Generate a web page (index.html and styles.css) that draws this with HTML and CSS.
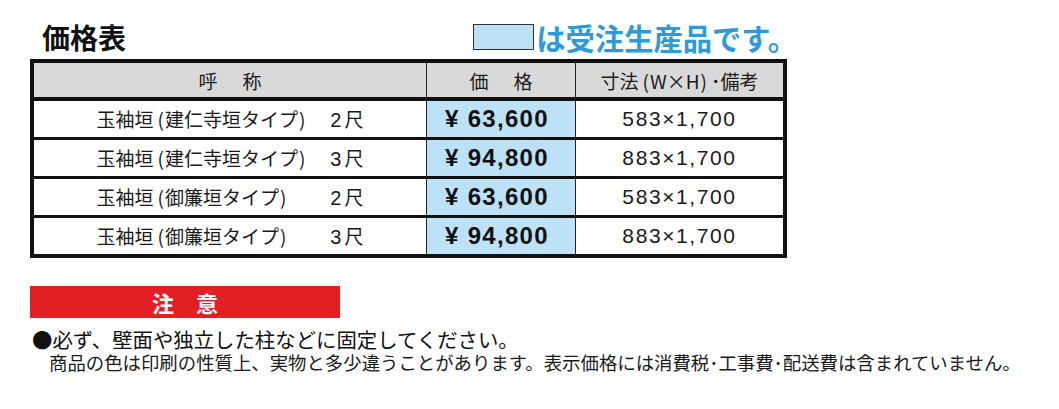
FILE: index.html
```html
<!DOCTYPE html>
<html lang="ja">
<head>
<meta charset="utf-8">
<title>価格表</title>
<link rel="stylesheet" href="styles.css">
</head>
<body>
<div class="page">
  <div class="top">
    <h1 class="title">価格表</h1>
    <div class="legend"><span class="legend-box"></span><span class="legend-text">は受注生産品です。</span></div>
  </div>

  <div class="table">
    <div class="row head">
      <div class="cell name">呼　称</div>
      <div class="cell price">価　格</div>
      <div class="cell size"><span class="nw">寸法<span class="pl">(</span>W×H<span class="pr">)</span>･備考</span></div>
    </div>
    <div class="row">
      <div class="cell name"><span class="name-in"><span class="nw">玉袖垣<span class="pl">(</span>建仁寺垣タイプ<span class="pr">)</span></span><span class="nw"><span class="num">2</span>尺</span></span></div>
      <div class="cell price made">¥ 63,600</div>
      <div class="cell size">583×1,700</div>
    </div>
    <div class="row">
      <div class="cell name"><span class="name-in"><span class="nw">玉袖垣<span class="pl">(</span>建仁寺垣タイプ<span class="pr">)</span></span><span class="nw"><span class="num">3</span>尺</span></span></div>
      <div class="cell price made">¥ 94,800</div>
      <div class="cell size">883×1,700</div>
    </div>
    <div class="row">
      <div class="cell name"><span class="name-in"><span class="nw">玉袖垣<span class="pl">(</span>御簾垣タイプ<span class="pr">)</span></span><span class="nw"><span class="num">2</span>尺</span></span></div>
      <div class="cell price made">¥ 63,600</div>
      <div class="cell size">583×1,700</div>
    </div>
    <div class="row">
      <div class="cell name"><span class="name-in"><span class="nw">玉袖垣<span class="pl">(</span>御簾垣タイプ<span class="pr">)</span></span><span class="nw"><span class="num">3</span>尺</span></span></div>
      <div class="cell price made">¥ 94,800</div>
      <div class="cell size">883×1,700</div>
    </div>
  </div>

  <div class="caution">注　意</div>
  <p class="note1">●必ず、壁面や独立した柱などに固定してください。</p>
  <p class="note2">商品の色は印刷の性質上、実物と多少違うことがあります。表示価格には消費税･工事費･配送費は含まれていません。</p>
</div>
</body>
</html>
```

FILE: styles.css
```css
html, body {
  margin: 0;
  padding: 0;
  background: #fff;
}
body {
  font-family: "Noto Sans CJK JP", "Noto Sans", sans-serif;
  color: #1a1a1a;
}
.page {
  padding: 22px 0 0 30px;
  width: 757px;
}
.top {
  display: flex;
  align-items: center;
  height: 30px;
}
.title {
  margin: 0 0 0 12px;
  font-size: 28px;
  line-height: 30px;
  font-weight: 700;
  color: #111;
}
.legend {
  display: flex;
  align-items: center;
  margin-left: auto;
  margin-right: -10px;
}
.legend-box {
  width: 59px;
  height: 24px;
  background: #bde2f7;
  border: 1px solid #333;
  margin-right: 2px;
}
.legend-text {
  font-size: 29.3px;
  line-height: 30px;
  font-weight: 700;
  color: #2e9bd8;
}
.table {
  margin-top: 7px;
  border: 4px solid #111;
}
.row {
  display: grid;
  grid-template-columns: 392px 149px 208px;
  grid-template-rows: 36px;
  height: 36px;
  border-top: 3px solid #111;
}
.row.head {
  grid-template-rows: 34px;
  height: 34px;
  border-top: 0;
  border-bottom: 4px solid #111;
  background: #d9d9d9;
  font-size: 19px;
}
.row.head + .row {
  border-top: 0;
}
.cell {
  display: flex;
  align-items: center;
  justify-content: center;
  box-sizing: border-box;
  min-width: 0;
  white-space: nowrap;
}
.nw {
  white-space: nowrap;
  flex-shrink: 0;
}
.cell.price, .cell.size {
  border-left: 1px solid #222;
}
.head .cell.name, .head .cell.price {
  letter-spacing: 3px;
  padding-left: 3px;
}
.pl {
  padding: 0 1px 0 4px;
}
.pr {
  padding: 0 4px 0 1px;
}
.num {
  font-family: "Liberation Sans", Arial, sans-serif;
  font-size: 20px;
  margin-right: 3px;
}
.name-in {
  display: flex;
  justify-content: space-between;
  width: 267px;
  font-size: 19px;
  line-height: 24px;
  color: #1a1a1a;
}
.made {
  background: #bde2f7;
  font-family: "Liberation Sans", Arial, sans-serif;
  font-weight: 700;
  font-size: 24px;
  letter-spacing: 1.3px;
  color: #111;
  padding-right: 8px;
}
.row:not(.head) .cell.size {
  font-family: "Liberation Sans", Arial, sans-serif;
  font-size: 21px;
  letter-spacing: 1.6px;
  color: #1a1a1a;
}
.caution {
  margin-top: 28px;
  width: 310px;
  height: 32px;
  background: #e31f26;
  color: #fff;
  font-weight: 700;
  font-size: 22px;
  line-height: 32px;
  text-align: center;
}
.note1 {
  margin: 8px 0 0 2px;
  font-size: 20.4px;
  line-height: 26px;
  white-space: nowrap;
  color: #111;
}
.note2 {
  margin: -2px 0 0 19px;
  font-size: 18.4px;
  line-height: 24px;
  white-space: nowrap;
  color: #1a1a1a;
}
```
